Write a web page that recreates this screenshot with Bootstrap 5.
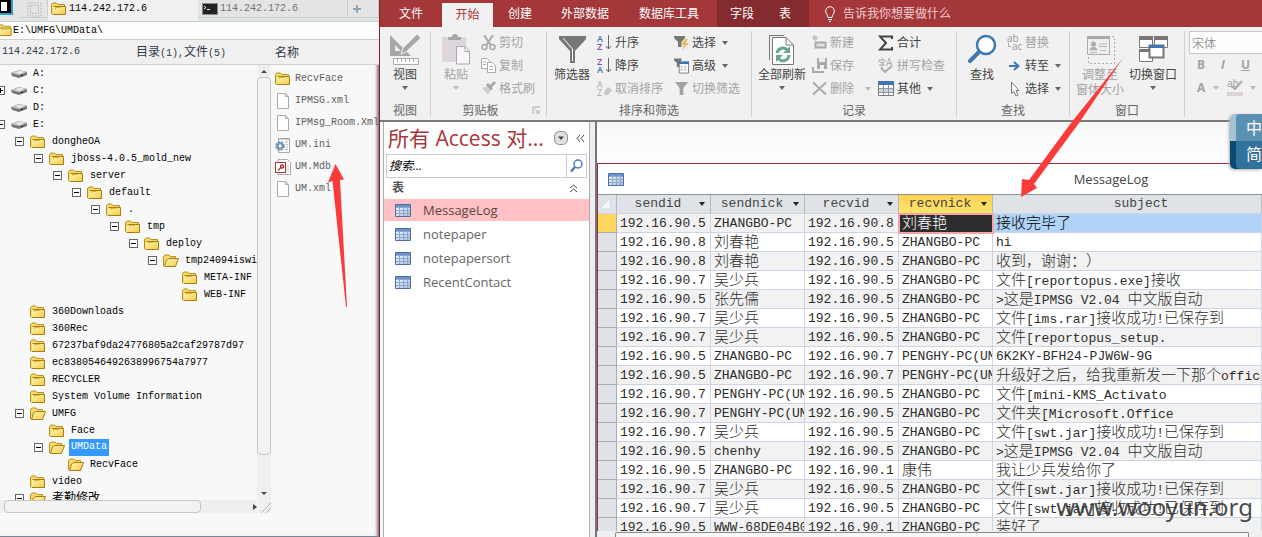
<!DOCTYPE html>
<html lang="zh-CN">
<head>
<meta charset="utf-8">
<meta name="viewport" content="width=device-width, initial-scale=1">
<title>MessageLog</title>
<link href="https://cdn.jsdelivr.net/npm/bootstrap@5.3.0/dist/css/bootstrap.min.css" rel="stylesheet">
<style>
:root{--ui:"Open Sans","Noto Sans CJK SC",sans-serif;--mono:"Liberation Mono","Noto Sans CJK SC",monospace}
body{font:12px/16px var(--ui);color:#444;background:#f8f8f8}
button,input{font:inherit;color:inherit}
svg{display:block;flex:none}
.zh{font-family:"Noto Sans CJK SC",sans-serif;font-size:12px;text-spacing-trim:space-all;font-kerning:none}

/* file manager */
.files{width:380px;font:10px/16px var(--mono);color:#000;border-right:1px solid #8e1d25;box-shadow:inset -3px 0 3px -1px #777}
.tabs{height:22px;background:#e4e4e4;border-bottom:1px solid #c5d1d1}
.tabs button{border:0;background:none;padding:0;height:19px}
.tabs .cell{height:18px;border-right:1px solid #c5cfcf;border-bottom:1px solid #c5cfcf}
.tabs .tab{width:150px;padding-left:3px;gap:2px}
.tabs .on{background:#f0f0f0;height:21px;padding-bottom:4px}
.path{height:18px;background:#fdfdfd;border-bottom:1px solid #c5d1d1}
.path input{border:0;background:none;padding:0;outline:0;color:#000}
.heads{height:25px;background:#f0f0f0;border-bottom:1px solid #cfcfcf;color:#2c3a48}
.left{width:271px}
.tree{height:435px}
.node{height:17px;white-space:nowrap}
.node .gap{width:6px;flex:none}
.node .nobox{width:9px;flex:none}
.label{margin-left:4px;padding:0 2px}
.box{width:9px;height:9px;border:1px solid #666;background:#fff;position:relative;flex:none}
.box::before{content:"";position:absolute;left:1px;right:1px;top:3px;height:1px;background:#000}
.box.plus::after{content:"";position:absolute;top:1px;bottom:1px;left:3px;width:1px;background:#000}
.pick{background:#3399ff;color:#fff;height:17px}
.vbar{width:14px;background:#efefef}
.vbar i{border:1px solid #c6c6c6;border-radius:4px;background:#f3f3f3;height:378px;display:block}
.hbar{height:13px;background:#efefef}
.hbar i{border:1px solid #c6c6c6;border-radius:4px;background:#f3f3f3;width:197px;height:13px}
.file{height:22px;color:#5c5c5c;white-space:nowrap}
.foot{border-bottom:1px solid #7b8794}

/* ribbon */
.menu{height:27px;background:#a4373a;color:#fff}
.menu button{border:0;background:none;height:27px;padding:0;text-align:center;white-space:nowrap}
.menu .open{background:#f1f1f1;color:#a4373a;height:24px;width:51px}
.menu .ctx{background:#832b2e;width:92px;margin-left:18px}
.ribbon{height:95px;background:#f1f1f1;border-bottom:2px solid #7a7a7a}
.grp{margin-top:4px;height:86px;border-right:1px solid #d2d2d2;flex:none}
.grp .main{height:69px}
.cap{height:17px;color:#666;text-align:center;line-height:22px}
.grp button{border:0;background:none;padding:0;white-space:nowrap}
.big{display:flex;flex-direction:column;align-items:center;line-height:15px;padding-top:2px!important}
.big svg{margin-bottom:2px}
.sm{display:flex;align-items:center;height:23px;gap:3px}
.grp .off,.off{color:#a3a3a3}
.car{width:0;height:0;border:3px solid transparent;border-top:4px solid #666;border-bottom:0;margin-left:3px}
.off .car{border-top-color:#bbb}
.fontbox{height:23px;border:1px solid #c6c6c6;background:#fdfdfd;padding:0 2px;width:90px;color:#999}

/* navigation pane */
.nav-pane{width:207px;margin-left:3px;border:1px solid #a9adb3;border-top:0;border-bottom:0;background:#fff}
.nav-pane h1{font:400 21px/32px var(--ui);color:#a4373a;margin:0;white-space:nowrap}
.nav-pane h1 span{font-weight:500}
.find{height:24px;border:1px solid #ccc;margin:0 2px}
.find input{border:0;outline:0;width:182px;font-style:italic;padding:0 2px;color:#000}
.find button{border:0;border-left:1px solid #ccc;background:none;padding:0 3px}
.obj{height:24px;padding-left:11px;gap:12px;font-size:13px;color:#666;text-decoration:none}
.obj.active{background:#ffc1c3;color:#5c4444;height:22px;margin:1px 0}
.split{width:7px;background:#eceef2;border-right:2px solid #73767b}

/* datasheet */
.doc{background:#fff}
.blank{height:41px;background:linear-gradient(#f7f7f7,#fff)}
.sheet{border:1px solid #9e2d36;border-width:1px 0 0 1px}
.cap-row{height:31px;border-bottom:1px solid #8c9097}
.cap-row .name{padding-left:336px;color:#444;font-size:13px}
.grid{table-layout:fixed;width:100%;border-collapse:separate;border-spacing:0;font:13px/20px var(--mono);color:#2c2c2c}
.grid .zh{font-size:15px;font-weight:300;line-height:16px}
.grid th{height:19px;background:#dfe3e8;font-weight:400;padding:0;border-right:1px solid #b4bac2;border-bottom:1px solid #cdd5e2;text-align:center;color:#444;line-height:18px}
.grid thead th:last-child{padding-left:28px}
.grid td,.grid tbody th{height:19px;padding:0 0 0 3px;border-right:1px solid #cdd5e5;border-bottom:1px solid #cdd5e5;white-space:nowrap;overflow:hidden}
.grid tbody th{background:#dfe3e8;border-color:#a9adb3}
.grid tr:nth-child(odd) td{background:#f2f2f2}
.grid tbody tr:first-child th{background:#ffd65e}
.grid thead .hot{background:linear-gradient(#ffd24f,#ffe46e)}
.grid tr:first-child td.cur{background:#2d2d2d;color:#fff;outline:2px solid #f5a3a5;outline-offset:-1px}
.grid tr:first-child td.sel{background:#b0d3f8;color:#000}
.cellbox{display:block;height:18px;overflow:hidden}
.grid .car{margin:0 5px 0 0;border-top-color:#222}
.strip{height:6px;background:#efefef}
.strip div{border:1px solid #8b8b8b;border-bottom:0;border-radius:2px 2px 0 0;background:#f8f8f8;margin:1px 13px 0 18px;height:5px}

/* floating items */
.arrows{left:0;top:0;pointer-events:none;z-index:5}
.ime{right:0;top:114px;width:32px;height:55px;border-radius:5px 0 0 5px;background:linear-gradient(#a5c1d4 49%,#0d4a70 50%);z-index:4;box-shadow:-1px 1px 3px #aaa}
.ime div{margin-left:6px;padding-left:10px;height:27px;color:#fff;font-size:16px;line-height:28px;background:#5c90b2;border-radius:4px 0 0 0;overflow:hidden;white-space:nowrap}
.ime div+div{background:#32719a;height:28px;line-height:26px;border-radius:0 0 0 4px}
.mark-url{right:9px;bottom:14px;z-index:6;font:24px/32px "Noto Sans",sans-serif;color:#333;opacity:.88}
</style>
</head>
<body class="vh-100 d-flex overflow-hidden position-relative">

<svg width="0" height="0" class="position-absolute" aria-hidden="true">
<defs>
<linearGradient id="gold" x2="1" y2="1"><stop stop-color="#fff7b8"/><stop offset="1" stop-color="#f2cb45"/></linearGradient>
<linearGradient id="tb" x2="1" y2="1"><stop stop-color="#fff"/><stop offset="1" stop-color="#9fbbe2"/></linearGradient>
<symbol id="folder" viewBox="0 0 16 14"><path d="M.5 12V2.500L2 1H5.500L7 2.500H13.500V5" fill="#f5d96b" stroke="#b8901c"/><path d="M2.500 4.500H14.500V12.500H1.500" fill="url(#gold)" stroke="#a87d12"/><path d="M4.500 7V5.500H9.500" stroke="#d9b53c" fill="none"/></symbol>
<symbol id="fopen" viewBox="0 0 16 14"><path d="M.5 12V2.500L2 1H6L7.500 2.500H12.500V5" fill="#f5d96b" stroke="#b8901c"/><path d="M4.500 5.500 6 4.500H15.500L12.500 12.500H1.500L3.500 6Z" fill="url(#gold)" stroke="#a87d12"/></symbol>
<symbol id="drive" viewBox="0 0 16 10"><path d="M0 4 8 1 16 3V6L8 9 1 7Z" fill="#777"/><path d="M0 4 8 1 16 3 8 6Z" fill="#c9c9c9"/><path d="M5 3 10 2 13 3 8 5Z" fill="#eee"/><path d="M10 6h2v1h-2z" fill="#222"/></symbol>
<symbol id="page" viewBox="0 0 14 16"><path d="M1.500.5H9.500L12.500 3.500V15.500H1.500Z" fill="#fff" stroke="#aaa"/><path d="M9.500.5V3.500H12.500" fill="none" stroke="#aaa"/></symbol>
<symbol id="ini" viewBox="0 0 16 16"><path d="M3.500 1.500H14.500V15.500H3.500Z" fill="#fafafa" stroke="#aaa"/><path d="M5 1v2M8 1v2M11 1v2M13 1v2" stroke="#999"/><path d="M10 5H13M11 7.500H13M11 10H13M10 12.500H13" stroke="#a7bccd"/><circle cx="5" cy="9" r="3.500" fill="none" stroke="#6d93b5" stroke-width="2.500" stroke-dasharray="2 .8"/><circle cx="5" cy="9" r="2.500" fill="none" stroke="#6d93b5" stroke-width="1.500"/></symbol>
<symbol id="mdb" viewBox="0 0 16 16"><path d="M5.500.5H12.500L15.500 3.500V15.500H3V.5Z" fill="#fff" stroke="#aaa"/><path d="M11 5h3v8h-3z" fill="#f5e3e3"/><rect x=".5" y="3.500" width="10" height="10" fill="#fff" stroke="#a4373a"/><path d="M3 11.500 6 8.500" stroke="#a4373a" stroke-width="1.500"/><circle cx="7" cy="7.500" r="1.500" fill="none" stroke="#a4373a" stroke-width="1.500"/></symbol>
<symbol id="tbl" viewBox="0 0 16 13"><path d="M.5.5H15.500V12.500H.5Z" fill="url(#tb)" stroke="#4e6f9f"/><path d="M1 1H15V3H1Z" fill="#6f93c9"/><path d="M1 3.500H15M1 6.500H15M1 9.500H15M4.500 3V12M8.500 3V12M12.500 3V12" stroke="#92a8c8"/></symbol>
<symbol id="funnel" viewBox="0 0 16 16"><path d="M1 1H15L10 7.500V15H6V7.500Z" fill="currentColor"/></symbol>
</defs></svg>

<aside class="files flex-shrink-0 d-flex flex-column overflow-hidden" id="files">
  <div class="tabs d-flex flex-shrink-0">
    <svg width="18" height="18" viewBox="0 0 18 18"><path d="M0 0H12V14H0" fill="none" stroke="#23a4c4" stroke-width="2"/><path d="M0 1H10V12H0Z" fill="#fff" stroke="#000" stroke-width="2"/><path d="M8 2V12" stroke="#000" stroke-width="2"/></svg>
    <button class="cell flex-shrink-0 ps-2 border-start" style="width:30px" aria-label="布局"><svg width="15" height="16" viewBox="0 0 15 16"><path d="M1 2H14V15H1ZM3.500 4.500H11.500V12.500H3.500Z" fill="none" stroke="#bbb" stroke-dasharray="2 1"/></svg></button>
    <button class="tab on d-flex align-items-center flex-shrink-0"><svg width="16" height="14"><use href="#folder"/></svg>114.242.172.6</button>
    <button class="tab cell d-flex align-items-center flex-shrink-0 text-secondary border-start"><svg width="16" height="12" viewBox="0 0 16 12"><path d="M.5.500H15.500V11.500H.5Z" fill="#222" stroke="#888"/><path d="M2 3 4 4.500 2 6M5 6.500H8" stroke="#eee" fill="none"/></svg>114.242.172.6</button>
    <button class="cell flex-grow-1" aria-label="新建"><svg width="20" height="16" viewBox="0 0 20 16"><path d="M5 8H13M9 4V12" stroke="#8fa4b0" stroke-width="2"/></svg></button>
  </div>
  <div class="path d-flex align-items-center flex-shrink-0">
    <svg width="13" height="13" viewBox="3 0 13 14"><use href="#folder" width="16" height="14"/></svg>
    <input class="flex-grow-1" aria-label="路径" value="E:\UMFG\UMData\">
  </div>
  <div class="heads d-flex align-items-center flex-shrink-0">
    <div class="left d-flex align-items-center"><span style="width:136px;padding-left:2px">114.242.172.6</span><span><span class="zh">目录</span>(1),<span class="zh">文件</span>(5)</span></div>
    <span class="zh ps-1">名称</span>
  </div>
  <div class="d-flex">
    <div class="left flex-shrink-0">
      <div class="d-flex tree"><div class="flex-grow-1 overflow-hidden" id="tree"></div>
        <div class="vbar flex-shrink-0 d-flex flex-column"><svg width="14" height="12"><path d="M4 8H10L7 5Z" fill="#444"/></svg><i></i><span class="flex-grow-1"></span><svg width="14" height="14"><path d="M4 6H10L7 9Z" fill="#444"/></svg></div></div>
      <div class="hbar d-flex ps-1"><i></i><span class="flex-grow-1"></span><svg width="10" height="13"><path d="M4 4V10L8 7Z" fill="#444"/></svg><svg width="12" height="13"><path d="M2 13 12 3M7 13 12 8" stroke="#bbb"/></svg></div>
    </div>
    <div class="pt-1 overflow-hidden" id="list" style="margin-top:-1px"></div>
  </div>
  <div class="foot flex-grow-1"></div>
</aside>

<main class="flex-grow-1 d-flex flex-column overflow-hidden">
  <nav class="menu d-flex align-items-end flex-shrink-0">
    <button style="width:62px">文件</button><button class="open">开始</button><button style="width:54px">创建</button><button style="width:76px">外部数据</button><button style="width:76px" class="ps-2 ms-1">数据库工具</button>
    <div class="ctx d-flex" style="margin-left:14px"><button style="width:50px">字段</button><button style="width:36px">表</button></div>
    <button class="d-flex align-items-center ms-3 gap-2" style="color:#f0cfd0"><svg width="10" height="16" viewBox="0 0 10 16"><path d="M3 11.500C3 9 .7 8 .7 5A4.300 4.300 0 0 1 9.300 5C9.300 8 7 9 7 11.500ZM3 13.500H7M4 15.500H6" fill="none" stroke="#fff"/></svg>告诉我你想要做什么</button>
  </nav>
  <section class="ribbon d-flex flex-shrink-0 overflow-hidden">
    <div class="grp" style="width:51px"><div class="main d-flex justify-content-center">
      <button class="big"><svg width="32" height="32" viewBox="0 0 32 32"><path d="M1 2V23H22ZM6 12V18H12Z" fill="#a9a6a9" fill-rule="evenodd"/><path d="M28 1 32 5 17 19 12 21 14 15Z" fill="#a9a6a9" stroke="#f1f1f1"/><path d="M4.500 25.500H29.500V31.500H4.500ZM8.500 26V29M12.500 26V29M16.500 26V29M20.500 26V29M24.500 26V29" fill="#fff" stroke="#aaa"/></svg>视图<span class="car ms-0 mt-1"></span></button></div><div class="cap">视图</div></div>
    <div class="grp" style="width:116px"><div class="main d-flex ps-2">
      <button class="big off" style="width:34px"><svg width="32" height="32" viewBox="0 0 32 32"><path d="M2 4H26V29H2Z" fill="#ddd6dc"/><path d="M8 7V4H12A3 3 0 0 1 18 4H21V7Z" fill="#a9a5a8"/><path d="M16.500 13.500H25L29.500 18V31H16.500Z" fill="#fbf4fb" stroke="#aaa"/><path d="M25 14V18.500H29" fill="none" stroke="#aaa"/></svg>粘贴<span class="car ms-0 mt-1"></span></button>
      <div class="ps-2 off">
        <button class="sm"><svg width="15" height="16" viewBox="0 0 15 16"><path d="M3 0 9.500 10M12 0 5.500 10" stroke="#aaa" stroke-width="2"/><circle cx="3.500" cy="12" r="2.500" fill="none" stroke="#aaa" stroke-width="1.500"/><circle cx="11.500" cy="12" r="2.500" fill="none" stroke="#aaa" stroke-width="1.500"/></svg>剪切</button>
        <button class="sm"><svg width="15" height="15" viewBox="0 0 15 15"><path d="M.5.500H6L8.500 3V10.500H.5ZM2 4H5M2 6.500H5" fill="#fff" stroke="#aaa"/><path d="M6.500 4.500H11.500L14.500 7.500V14.500H6.500ZM8.500 8.500H12M8.500 11.500H12" fill="#fff" stroke="#aaa"/></svg>复制</button>
        <button class="sm"><svg width="15" height="15" viewBox="0 0 15 15"><path d="M1 7 6 5 10 9 7 14Z" fill="#d5ced4"/><path d="M5 4 7 2 12 7 10 9.500ZM9 4 13 0 15 2 11 6Z" fill="#a9a5a8"/></svg>格式刷</button>
      </div></div><div class="cap d-flex"><span class="flex-grow-1" style="padding-right:16px;padding-left:14px">剪贴板</span><svg width="14" height="16"><path d="M1 14V7H8M3 9 7 13M7 10V13H4" fill="none" stroke="#aaa"/></svg></div></div>
    <div class="grp" style="width:205px"><div class="main d-flex ps-1">
      <button class="big" style="width:42px"><svg width="32" height="32" viewBox="0 0 32 32"><path d="M3 3H30V6L19 18V30H14V18L3 6Z" fill="#777"/><path d="M7 5 16.500 16V28" fill="none" stroke="#fff"/></svg>筛选器</button>
      <div class="ps-1" style="width:77px">
        <button class="sm"><svg width="15" height="17" viewBox="0 0 15 17"><text x="0" y="8" font-size="9" font-weight="600" fill="#3f76b4">A</text><text x="0" y="16" font-size="9" font-weight="600" fill="#8a4fa8">Z</text><path d="M11.500 1V15M9 12 11.500 15 14 12" fill="none" stroke="#666"/></svg>升序</button>
        <button class="sm"><svg width="15" height="17" viewBox="0 0 15 17"><text x="0" y="8" font-size="9" font-weight="600" fill="#8a4fa8">Z</text><text x="0" y="16" font-size="9" font-weight="600" fill="#3f76b4">A</text><path d="M11.500 1V15M9 12 11.500 15 14 12" fill="none" stroke="#666"/></svg>降序</button>
        <button class="sm off"><svg width="15" height="17" viewBox="0 0 15 17"><text x="0" y="8" font-size="9" fill="#aaa">A</text><text x="0" y="16" font-size="9" fill="#aaa">Z</text><path d="M7 12 11 7 15 10 11 15H8Z" fill="#c9c5c8"/></svg>取消排序</button>
      </div>
      <div class="ps-1">
        <button class="sm"><svg width="15" height="15" viewBox="0 0 15 15"><path d="M0 1H11V3L7.500 7V12H4V7L0 3Z" fill="#777"/><path d="M11 4 7 10H10L8 15 15 8H11.500L14 4Z" fill="#efba62"/></svg>选择<span class="car"></span></button>
        <button class="sm"><svg width="15" height="16" viewBox="0 0 16 16"><path d="M0 0H8V2L5.500 4.500V9H3V4.500L0 2Z" fill="#777"/><path d="M5.500 4.500H15.500V15.500H5.500Z" fill="#fff" stroke="#777"/><path d="M5 3H16V6H5Z" fill="#3f76b4"/><path d="M7 9h2M11 9h2M7 12h2M11 12h2" stroke="#777"/></svg>高级<span class="car"></span></button>
        <button class="sm off"><svg width="15" height="15"><use href="#funnel"/></svg>切换筛选</button>
      </div></div><div class="cap">排序和筛选</div></div>
    <div class="grp" style="width:205px"><div class="main d-flex ps-1">
      <button class="big" style="width:52px"><svg width="32" height="32" viewBox="0 0 32 32"><path d="M3.500 27V2.500H18" fill="none" stroke="#777"/><path d="M6.500 4.500H20L27.500 12V31.500H6.500Z" fill="#fff" stroke="#777"/><path d="M20 5V12H27" fill="none" stroke="#777"/><path d="M11 20A6 6 0 0 1 22 18M23 22A6 6 0 0 1 12 25" fill="none" stroke="#6aa58c" stroke-width="3"/><path d="M24 13V20H17ZM10 29V22H17Z" fill="#6aa58c"/></svg>全部刷新<span class="car ms-0 mt-1"></span></button>
      <div class="off ps-1" style="width:70px">
        <button class="sm"><svg width="15" height="15" viewBox="0 0 15 15"><path d="M3.500 7.500H13.500V12.500H3.500Z" fill="#e5e0e4" stroke="#aaa" stroke-width="2"/><path d="M3 0V6M0 3H6M1 1 5 5M5 1 1 5" stroke="#bbb"/></svg>新建</button>
        <button class="sm"><svg width="15" height="15" viewBox="0 0 15 15"><path d="M5 0H15V11H5Z" fill="#aaa"/><path d="M7 0H13V4H7ZM8 7H12V11H8Z" fill="#eee"/><path d="M1 9V14H12" fill="none" stroke="#aaa" stroke-width="2"/></svg>保存</button>
        <button class="sm"><svg width="15" height="15" viewBox="0 0 15 15"><path d="M1 1.500 14 13.500M14 1.500 1 13.500" stroke="#aaa" stroke-width="2"/></svg>删除<span class="car ms-2"></span></button>
      </div>
      <div>
        <button class="sm"><svg width="16" height="16" viewBox="0 0 16 16"><path d="M14 4V1.500H2L8 8 2 14.500H14V12" fill="none" stroke="#444" stroke-width="2"/></svg>合计</button>
        <button class="sm off"><svg width="16" height="16" viewBox="0 0 16 16"><path d="M1 4V2H7V4M4 0V2M2 4.500H6L4 6V10M1 7H7" fill="none" stroke="#aaa"/><text x="8" y="8" font-size="10" fill="#aaa">A</text><path d="M3 10 7 14 14 8" fill="none" stroke="#aaa" stroke-width="2"/></svg>拼写检查</button>
        <button class="sm"><svg width="16" height="15" viewBox="0 0 16 15"><path d="M.5.500H15.500V14.500H.5Z" fill="#fff" stroke="#777"/><path d="M0 0H16V4H0Z" fill="#3f76b4"/><path d="M1 7H15V11H1Z" fill="#c3d8ee"/><path d="M1 7.500H15M1 11.500H15M5.500 4V14M10.500 4V14" stroke="#999"/></svg>其他<span class="car"></span></button>
      </div></div><div class="cap">记录</div></div>
    <div class="grp" style="width:113px"><div class="main d-flex ps-2">
      <button class="big" style="width:34px"><svg width="32" height="32" viewBox="0 0 32 32"><circle cx="20" cy="12" r="9" fill="#fff" stroke="#3f76b4" stroke-width="2.500"/><path d="M13 19 4 28" stroke="#3f76b4" stroke-width="4" stroke-linecap="round"/></svg>查找</button>
      <div class="ps-2">
        <button class="sm off"><svg width="15" height="17" viewBox="0 0 15 17"><text x="0" y="8" font-size="10" fill="#999">ab</text><text x="5" y="16" font-size="10" fill="#999">ac</text><path d="M1.500 9V12.500H4" fill="none" stroke="#aaa"/></svg>替换</button>
        <button class="sm"><svg width="15" height="12" viewBox="0 0 15 12"><path d="M2 6H11M7 2 11.500 6 7 10" fill="none" stroke="#3f76b4" stroke-width="2"/></svg>转至<span class="car"></span></button>
        <button class="sm"><svg width="15" height="16" viewBox="0 0 15 16"><path d="M4.500 1V12.500L7 10.500 9 15 11 14 9 9.500H12Z" fill="#fff" stroke="#777"/></svg>选择<span class="car"></span></button>
      </div></div><div class="cap">查找</div></div>
    <div class="grp" style="width:115px"><div class="main d-flex ps-1">
      <button class="big off" style="width:52px"><svg width="32" height="32" viewBox="0 0 32 32"><path d="M4 3.500H30.500V30.500H4.500V22" fill="none" stroke="#aaa" stroke-dasharray="2 2"/><path d="M3.500 3.500H25.500V21.500H3.500Z" fill="#eee" stroke="#aaa"/><path d="M3 3H26V6H3Z" fill="#aaa"/><circle cx="9.500" cy="11" r="2.500" fill="#aaa"/><path d="M6 17C6 13 13 13 13 17ZM15 11H23M15 13.500H23M6 19.500H13M16 17.500H22" fill="#aaa" stroke="#bbb"/></svg><span>调整至<br>窗体大小</span></button>
      <button class="big" style="width:54px"><svg width="32" height="32" viewBox="0 0 32 32"><path d="M2.500 4.500H15.500V14.500H2.500ZM17.500 4.500H30.500V14.500H17.500ZM2.500 17.500H15.500V28.500H2.500Z" fill="#fff" stroke="#777"/><path d="M2 3H16V7H2ZM17 3H31V7H17ZM2 16H14V19H2Z" fill="#777"/><path d="M12.500 12.500H26.500V24.500H12.500Z" fill="#fff" stroke="#777" stroke-width="2"/><path d="M12 12H27V15H12Z" fill="#3f76b4"/></svg>切换窗口<span class="car ms-0 mt-1"></span></button>
      </div><div class="cap">窗口</div></div>
    <div class="grp border-0 ps-1 off">
      <input class="fontbox" aria-label="字体" value="宋体">
      <div class="d-flex fw-bold align-items-center ps-1 gap-2" style="height:22px"><button class="px-1">B</button><button class="px-1 fst-italic">I</button><button class="px-1 text-decoration-underline">U</button></div>
      <div class="d-flex align-items-center ps-2 gap-2" style="height:23px"><button class="d-flex align-items-center gap-1 fw-bold">A<span class="car ms-1"></span></button><button class="d-flex align-items-center gap-1" aria-label="突出显示"><svg width="16" height="17" viewBox="0 0 16 17"><text x="0" y="8" font-size="10" fill="#999">ab</text><path d="M15 2 8 10 4 7" fill="none" stroke="#aaa" stroke-width="2"/><path d="M0 13H16V17H0Z" fill="#ddd3dc"/></svg><span class="car"></span></button></div>
    </div>
  </section>

  <div class="flex-grow-1 d-flex overflow-hidden">
    <nav class="nav-pane flex-shrink-0 px-0">
      <div class="d-flex align-items-center ps-1 pe-1"><h1 class="flex-grow-1">所有 <span>Access</span> 对...</h1>
        <svg width="14" height="14" viewBox="0 0 14 14" class="me-2"><rect x=".5" y=".5" width="13" height="13" rx="5" fill="#dfe1e5" stroke="#888"/><path d="M4 5.500H10L7 9Z" fill="#444"/></svg>
        <svg width="9" height="9" viewBox="0 0 9 9"><path d="M4 1 1 4.500 4 8M8 1 5 4.500 8 8" fill="none" stroke="#444"/></svg></div>
      <div class="find d-flex"><input aria-label="搜索" value="搜索..."><button aria-label="查找对象"><svg width="13" height="14" viewBox="0 0 13 14"><circle cx="8" cy="5" r="4" fill="#fff" stroke="#4a7ebb" stroke-width="1.500"/><path d="M5 8 1 12.500" stroke="#4a7ebb" stroke-width="2.500"/></svg></button></div>
      <div class="d-flex align-items-center justify-content-between fw-bold ps-2" style="height:20px;padding-right:11px;color:#555"><span>表</span><svg width="9" height="9" viewBox="0 0 9 9"><path d="M1 4 4.500 1 8 4M1 8 4.500 5 8 8" fill="none" stroke="#444"/></svg></div>
      <a href="#" class="obj active d-flex align-items-center"><svg width="16" height="13"><use href="#tbl"/></svg>MessageLog</a>
      <a href="#" class="obj d-flex align-items-center"><svg width="16" height="13"><use href="#tbl"/></svg>notepaper</a>
      <a href="#" class="obj d-flex align-items-center"><svg width="16" height="13"><use href="#tbl"/></svg>notepapersort</a>
      <a href="#" class="obj d-flex align-items-center"><svg width="16" height="13"><use href="#tbl"/></svg>RecentContact</a>
    </nav>
    <div class="split flex-shrink-0"></div>
    <div class="doc flex-grow-1 d-flex flex-column overflow-hidden">
      <div class="blank flex-shrink-0"></div>
      <div class="sheet flex-grow-1 overflow-hidden">
        <div class="cap-row d-flex align-items-center"><svg width="16" height="13" style="margin-left:10px"><use href="#tbl"/></svg><span class="name flex-grow-1 text-center">MessageLog</span></div>
        <table class="grid">
          <colgroup><col style="width:19px"><col style="width:94px"><col style="width:94px"><col style="width:94px"><col style="width:94px"><col></colgroup>
          <thead><tr><th aria-label="全选"><svg width="14" height="14"><path d="M2 12H12V2Z" fill="#f6f8fa" stroke="#b9d0e6" stroke-width=".5"/></svg></th><th>sendid</th><th>sendnick</th><th>recvid</th><th class="hot">recvnick</th><th>subject</th></tr></thead>
          <tbody id="rows"></tbody>
        </table>
      </div>
      <div class="strip flex-shrink-0"><div></div></div>
    </div>
  </div>
</main>

<svg class="arrows position-absolute" width="1262" height="320" aria-hidden="true"><g fill="#fb3b3a"><path d="M335.500 164 344 179.500 340 180 347 307H346L332.500 181 328 182.500Z"/><path d="M1021 197 1022 179 1029 180 1071 123 1123 58 1079 123 1034 184 1037 188Z"/></g></svg>
<div class="ime position-absolute"><div>中</div><div>简</div></div>
<div class="mark-url position-absolute">www.wooyun.org</div>

<script>
// Chinese runs are set in their own, larger face
const zh = s => s.replace(/&/g, "&amp;").replace(/</g, "&lt;").replace(/[\u3000-\u9fff\uff00-\uffef]+/g, m => `<span class="zh">${m}</span>`);
const icon = (id, w, h) => `<svg width="${w}" height="${h}"><use href="#${id}"/></svg>`;

// [depth, box, icon, label]; each level is indented by 19px
const tree = [
  [0,"","drive","A:"],[0,"plus","drive","C:"],[0,"","drive","D:"],[0,"minus","drive","E:"],
  [1,"minus","folder","dongheOA"],[2,"minus","folder","jboss-4.0.5_mold_new"],[3,"minus","folder","server"],
  [4,"minus","folder","default"],[5,"minus","folder","."],[6,"minus","folder","tmp"],[7,"minus","folder","deploy"],
  [8,"minus","fopen","tmp24094iswin"],[9,"","folder","META-INF"],[9,"","folder","WEB-INF"],
  [1,"","folder","360Downloads"],[1,"","folder","360Rec"],[1,"","folder","67237baf9da24776805a2caf29787d97"],
  [1,"","folder","ec8380546492638996754a7977"],[1,"","folder","RECYCLER"],[1,"","folder","System Volume Information"],
  [1,"minus","fopen","UMFG"],[2,"","folder","Face"],[2,"minus","fopen","UMData"],[3,"","fopen","RecvFace"],
  [1,"","folder","video"],[1,"minus","fopen","考勤修改"]];
document.getElementById("tree").innerHTML = tree.map(([d, b, i, t]) =>
  `<div class="node d-flex align-items-center" style="margin-left:${d * 19 - 4}px">` +
  `<span class="${b ? "box " + b : "nobox"}"></span><span class="gap"></span>${icon(i, 16, i == "drive" ? 10 : 14)}` +
  `<span class="label ${t == "UMData" ? "pick" : ""}">${zh(t)}</span></div>`).join("");

const list = [["folder","RecvFace"],["page","IPMSG.xml"],["page","IPMsg_Room.Xml"],["ini","UM.ini"],["mdb","UM.Mdb"],["page","UM.xml"]];
document.getElementById("list").innerHTML = list.map(([i, t]) =>
  `<div class="file d-flex align-items-center ps-1 gap-1">${icon(i, 16, i == "folder" ? 14 : 16)}${t}</div>`).join("");

const Z = "ZHANGBO-PC", P = "PENGHY-PC(UMDD)";
const rows = [[5,Z,8,"刘春艳","接收完毕了"],[8,"刘春艳",5,Z,"hi"],[8,"刘春艳",5,Z,"收到，谢谢：）"],
  [7,"吴少兵",5,Z,"文件[reportopus.exe]接收"],[5,"张先儒",5,Z,">这是IPMSG V2.04 中文版自动"],
  [7,"吴少兵",5,Z,"文件[ims.rar]接收成功!已保存到"],[7,"吴少兵",5,Z,"文件[reportopus_setup."],
  [5,Z,7,P,"6K2KY-BFH24-PJW6W-9G"],[5,Z,7,P,"升级好之后，给我重新发一下那个office"],
  [7,P,5,Z,"文件[mini-KMS_Activato"],[7,P,5,Z,"文件夹[Microsoft.Office"],
  [7,"吴少兵",5,Z,"文件[swt.jar]接收成功!已保存到"],[5,"chenhy",5,Z,">这是IPMSG V2.04 中文版自动"],
  [5,Z,1,"康伟","我让少兵发给你了"],[7,"吴少兵",5,Z,"文件[swt.jar]接收成功!已保存到"],
  [7,"吴少兵",5,Z,"文件[swt.jar]接收成功!已保存到"],[5,"WWW-68DE04B0",1,Z,"装好了"]];
document.getElementById("rows").innerHTML = rows.map((r, n) => "<tr><th></th>" +
  ["192.16.90." + r[0], r[1], "192.16.90." + r[2], r[3], r[4]].map((t, c) =>
    `<td class="${n ? "" : ["", "", "", "cur", "sel"][c]}"><span class="cellbox">${zh(t)}</span></td>`).join("") + "</tr>").join("");

// sort arrows on the four narrow headings
document.querySelectorAll(".grid thead th").forEach((th, i) => {
  if (i > 0 && i < 5) th.innerHTML = `<span class="d-flex align-items-center"><span class="flex-grow-1">${th.textContent}</span><span class="car"></span></span>`;
});
</script>
<script src="https://cdn.jsdelivr.net/npm/bootstrap@5.3.0/dist/js/bootstrap.bundle.min.js"></script>
</body>
</html>
